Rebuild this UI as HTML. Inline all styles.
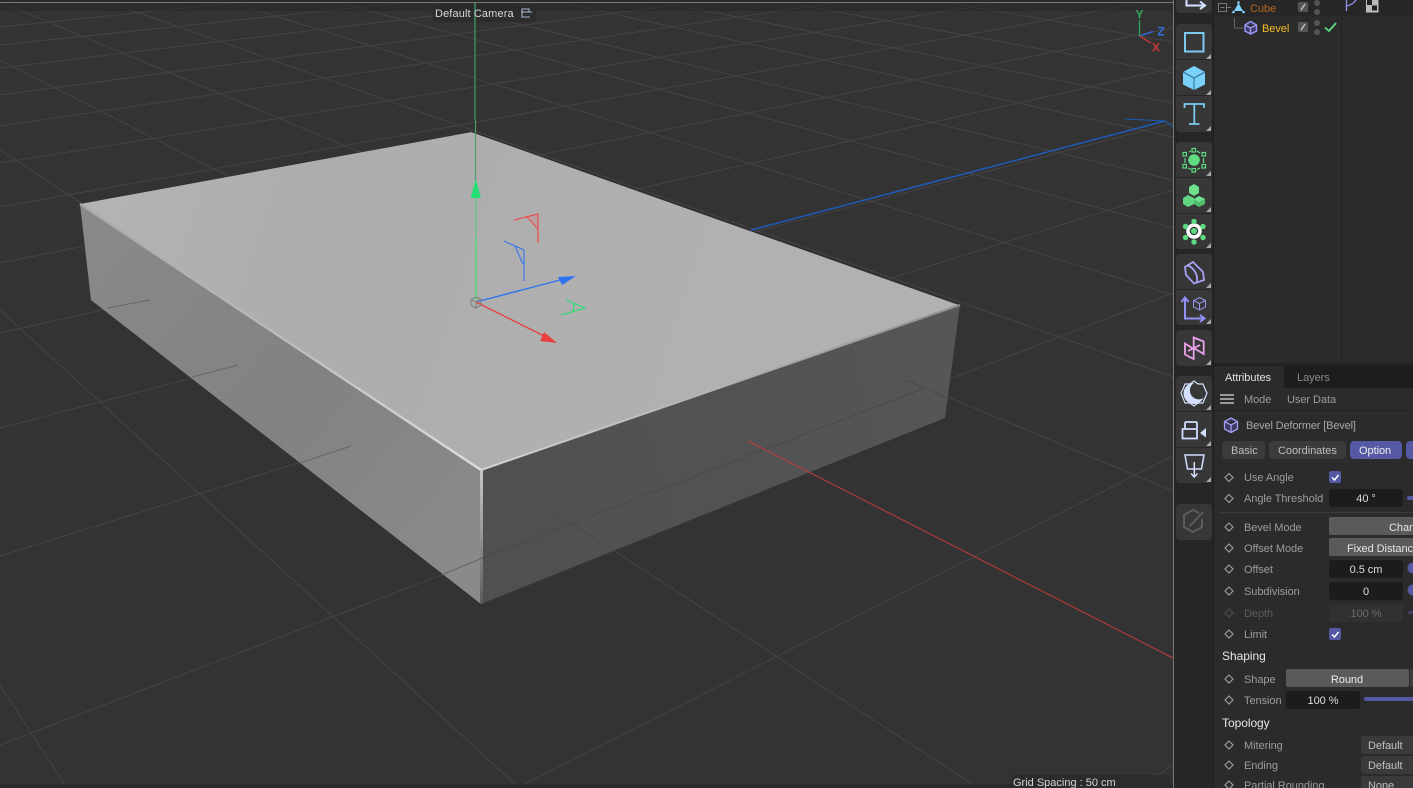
<!DOCTYPE html>
<html><head><meta charset="utf-8"><style>
html,body{margin:0;padding:0;background:#333;width:1413px;height:788px;overflow:hidden}
svg{display:block}
text{font-family:"Liberation Sans",sans-serif;font-size:11px;fill:#9c9c9c;letter-spacing:-.05px}
.v{fill:#dcdcdc;text-anchor:middle}
.h{fill:#e6e6e6;font-size:12px}
</style></head><body>
<svg width="1413" height="788" viewBox="0 0 1413 788" xmlns="http://www.w3.org/2000/svg">
<defs>
<linearGradient id="gt" gradientUnits="userSpaceOnUse" x1="80" y1="204" x2="700" y2="400"><stop offset="0" stop-color="#b4b4b4"/><stop offset=".35" stop-color="#adadad"/><stop offset="1" stop-color="#b1b1b1"/></linearGradient>
<linearGradient id="gl" gradientUnits="userSpaceOnUse" x1="100" y1="250" x2="480" y2="560"><stop offset="0" stop-color="#888"/><stop offset=".5" stop-color="#828282"/><stop offset="1" stop-color="#8a8a8a"/></linearGradient>
<linearGradient id="gr" gradientUnits="userSpaceOnUse" x1="481" y1="500" x2="950" y2="380"><stop offset="0" stop-color="#505050"/><stop offset=".5" stop-color="#525252"/><stop offset="1" stop-color="#565656"/></linearGradient>
<linearGradient id="gv" gradientUnits="userSpaceOnUse" x1="481" y1="470" x2="481" y2="604"><stop offset="0" stop-color="#c8c8c8"/><stop offset=".45" stop-color="#9a9a9a"/><stop offset="1" stop-color="#5a5a5a"/></linearGradient>
<linearGradient id="ge" gradientUnits="userSpaceOnUse" x1="481" y1="470" x2="960" y2="305"><stop offset="0" stop-color="#d4d4d4"/><stop offset="1" stop-color="#8e8e8e"/></linearGradient>
<linearGradient id="gf" gradientUnits="userSpaceOnUse" x1="80" y1="204" x2="481" y2="470"><stop offset="0" stop-color="#a8a8a8"/><stop offset=".45" stop-color="#b8b8b8"/><stop offset="1" stop-color="#dddddd"/></linearGradient>
</defs>

<!-- viewport -->
<rect width="1173" height="788" fill="#333"/>
<g stroke="#444" stroke-width="1" fill="none">
<!-- rising family -->
<path d="M0 27L233 3M0 45L400 3M0 68L540 3M0 95L690 3M0 126L833 3M0 163L997 3M0 207L1077 15L1130 5M0 263L1173 28M0 333L1173 68M0 428L1173 123M0 556L1173 190M0 745L1173 293M517 788L1173 456M1147 783L1173 765"/>
<!-- descending family -->
<path d="M666 3L1173 103M800 5L1173 73M564 3L1173 137M430 3L1173 180M340 3L1173 228M233 3L1173 295M128 9L1173 377M0 2L1173 491M0 60L476 302M0 150L975 786M0 310L517 786M0 685L67 788M950 3L1173 42"/>
</g>
<rect x="0" y="3" width="1173" height="8" fill="#262626" opacity=".55"/>
<rect x="0" y="0" width="1173" height="2" fill="#2b2b2b"/>
<rect x="0" y="2" width="1173" height="1" fill="#777"/>
<rect x="0" y="784" width="1173" height="4" fill="#2a2a2a"/>

<!-- box -->
<polygon points="80,204 481,470 481,604 91,300" fill="url(#gl)"/>
<polygon points="481,470 960,305 945,418 481,604" fill="url(#gr)"/>
<polygon points="80,204 472,132 960,305 481,470" fill="url(#gt)"/>
<path d="M472 132L960 305" stroke="#2a2a2a" stroke-width=".8" fill="none"/>
<path d="M80 204L481 470" stroke="url(#gf)" stroke-width="2.4" fill="none"/>
<path d="M481 470L960 305" stroke="url(#ge)" stroke-width="2" fill="none"/>
<path d="M481.5 470L481.5 604" stroke="url(#gv)" stroke-width="3" fill="none"/>
<g fill="none" stroke-width="1">
<path d="M107 308L150 300M192 377L238 365M300 463L351 446M442 575L482 558" stroke="#666"/>
<path d="M482 558L925 388M907 380L947 398M555 514L615 551" stroke="#494949"/>
<path d="M748 441L1173 658" stroke="#c23c3c"/>
<path d="M751 230L1165 121" stroke="#1f5cbc" stroke-width="1.500"/>
<path d="M1125 119L1165 121L1173 127" stroke="#1f5cbc"/>
</g>

<!-- gizmo -->
<path d="M475 3V120" stroke="#3b9a63" stroke-width="1.300"/>
<path d="M475.500 120V180" stroke="#4f9a6e" stroke-width="1.200"/>
<path d="M476 198V238" stroke="#5fc585" stroke-width="1.200"/>
<path d="M476 238V300" stroke="#3fe075" stroke-width="1.200"/>
<polygon points="475.700,179 481,198 470.700,198" fill="#22df72"/>
<path d="M476 302L560 280" stroke="#2f74ee" stroke-width="1.400"/>
<polygon points="576,276 558,277 562,285" fill="#2f74ee"/>
<path d="M476 302L544 336" stroke="#e84040" stroke-width="1.400"/>
<polygon points="557,343 544,332 540,341" fill="#e84040"/>
<path d="M514 220L538 214L538 243M527 217L538 229" stroke="#ef4444" stroke-width="1.100" fill="none"/>
<polygon points="527,217 538,214 538,229" fill="#d08080" opacity=".35"/>
<path d="M504 241L524 250L524 281M515 246L523 264" stroke="#3578e8" stroke-width="1.100" fill="none"/>
<path d="M566 300L585 308L561 315M574 304L573 313" stroke="#28e070" stroke-width="1.100" fill="none"/>
<path d="M476 297L481 299.500V305L476 308L471 305V299.500ZM471 299.500L476 302L481 299.500M476 302V308" stroke="#7d7d7d" stroke-width="1" fill="none"/>

<!-- corner axis -->
<path d="M1139.500 36V20" stroke="#2fa85c" stroke-width="1.300"/>
<path d="M1139.500 36L1153 31.500" stroke="#2e6fe0" stroke-width="1.300"/>
<path d="M1139.500 36L1151 43" stroke="#d03a3a" stroke-width="1.300"/>
<text x="1139.500" y="18.500" style="fill:#2fa85c;font-size:12px;font-weight:bold;text-anchor:middle">Y</text>
<text x="1161" y="35.500" style="fill:#2e6fe0;font-size:12px;font-weight:bold;text-anchor:middle">Z</text>
<text x="1156" y="51.500" style="fill:#c63a3a;font-size:12px;font-weight:bold;text-anchor:middle">X</text>

<!-- camera label -->
<rect x="433" y="5" width="103" height="17" rx="2" fill="#2a2a2a" opacity=".8"/>
<path d="M475 3V22" stroke="#3b9a63" stroke-width="1.300"/>
<text x="435" y="17" style="fill:#d8d8d8;letter-spacing:.12px">Default Camera</text>
<path d="M522 15V9H529V12M521 12H532M522 15V17H530" stroke="#a8b8d8" stroke-width="1" fill="none"/>
<!-- grid spacing -->
<rect x="1011" y="775" width="159" height="13" fill="#2c2c2c"/>
<text x="1013" y="786" style="fill:#d4d4d4;letter-spacing:0">Grid Spacing : 50 cm</text>

<!-- right side -->
<rect x="1173" y="0" width="240" height="788" fill="#2b2b2b"/>
<rect x="1173" y="0" width="1" height="788" fill="#777"/>
<rect x="1174" y="0" width="39" height="788" fill="#262626"/>
<rect x="1213" y="0" width="1" height="788" fill="#1e1e1e"/>
<g fill="#373737">
<rect x="1176" y="-6" width="36" height="19" rx="4"/>
<rect x="1176" y="24" width="36" height="108" rx="4"/>
<rect x="1176" y="142" width="36" height="107" rx="4"/>
<rect x="1176" y="254" width="36" height="71" rx="4"/>
<rect x="1176" y="330" width="36" height="36" rx="4"/>
<rect x="1176" y="376" width="36" height="107" rx="4"/>
<rect x="1176" y="504" width="36" height="36" rx="4"/>
</g>
<g fill="#262626">
<rect x="1176" y="59" width="36" height="1"/><rect x="1176" y="95" width="36" height="1"/>
<rect x="1176" y="177" width="36" height="1"/><rect x="1176" y="213" width="36" height="1"/>
<rect x="1176" y="289" width="36" height="1"/>
<rect x="1176" y="411" width="36" height="1"/><rect x="1176" y="447" width="36" height="1"/>
</g>
<g fill="#a8a8a8">
<polygon points="1211,54 1211,59 1206,59"/><polygon points="1211,90 1211,95 1206,95"/><polygon points="1211,126 1211,131 1206,131"/>
<polygon points="1211,171 1211,176 1206,176"/><polygon points="1211,207 1211,212 1206,212"/><polygon points="1211,243 1211,248 1206,248"/>
<polygon points="1211,283 1211,288 1206,288"/><polygon points="1211,319 1211,324 1206,324"/><polygon points="1211,360 1211,365 1206,365"/>
<polygon points="1211,405 1211,410 1206,410"/><polygon points="1211,441 1211,446 1206,446"/><polygon points="1211,477 1211,482 1206,482"/>
</g>

<!-- toolbar icons -->
<path d="M1186.500 0V5.500H1204M1200 1.500L1205 5.500L1200 9" stroke="#d5e2ff" stroke-width="2" fill="none"/>
<rect x="1185" y="33" width="18.500" height="18.500" fill="none" stroke="#7ccaf2" stroke-width="2"/>
<polygon points="1194,66 1205,72 1205,84.500 1194,90 1183,84.500 1183,72" fill="#7ad2fb"/>
<path d="M1183 72L1194 78L1205 72M1194 78V90" stroke="#3f7fa3" stroke-width="1.300" fill="none"/>
<path d="M1184.500 108V104H1204V108M1194.300 104V124M1189 124H1199.500" stroke="#7ccaf2" stroke-width="1.800" fill="none"/>

<circle cx="1194" cy="160" r="5.800" fill="#5fdc82"/>
<g fill="none" stroke="#5fdc82" stroke-width="1.200">
<rect x="1192" y="148.500" width="3.500" height="3.500"/><rect x="1183" y="152.500" width="3.500" height="3.500"/><rect x="1202" y="152.500" width="3.500" height="3.500"/>
<rect x="1183" y="164.500" width="3.500" height="3.500"/><rect x="1202" y="164.500" width="3.500" height="3.500"/><rect x="1192" y="168.500" width="3.500" height="3.500"/>
<path d="M1189 152L1191 151M1197 151L1200 153M1185 158V163M1203.500 158V163M1188 168L1191 169.500M1197 169.500L1200 168"/>
</g>
<g>
<polygon points="1194,184 1199,187 1199,193 1194,196 1189,193 1189,187" fill="#6fe08e"/>
<polygon points="1188,195 1194,198 1194,204 1188,207 1183,204 1183,198" fill="#62d582"/>
<polygon points="1199,196 1205,199 1205,204 1199,207 1194,204 1194,199" fill="#4fbd6e"/>
<polygon points="1199,196 1205,199 1199,202 1194,199" fill="#71e290"/>
</g>
<circle cx="1194" cy="231" r="6" fill="none" stroke="#fff" stroke-width="3.500"/>
<circle cx="1194" cy="231" r="3" fill="#5fdc82"/>
<g fill="#5fdc82"><circle cx="1194" cy="221.500" r="2.700"/><circle cx="1203" cy="226.500" r="2.700"/><circle cx="1203" cy="237.500" r="2.700"/><circle cx="1194" cy="242" r="2.700"/><circle cx="1185.500" cy="237.500" r="2.700"/><circle cx="1185.500" cy="226.500" r="2.700"/></g>

<path d="M1193 262L1203 272L1204 280L1194 283.500L1186 275L1185 267ZM1187 265C1194 268 1198 274 1197 282" stroke="#a6a2f2" stroke-width="1.800" fill="none"/>
<path d="M1185 299V318.500H1203M1181.500 302L1185 297.500L1188.500 302M1200 315L1204.500 318.500L1200 322" stroke="#9090f6" stroke-width="2" fill="none"/>
<path d="M1199.500 297.500L1205.500 300.500V307L1199.500 310L1193.500 307V300.500ZM1193.500 300.500L1199.500 303.500L1205.500 300.500M1199.500 303.500V310" stroke="#9a9af0" stroke-width="1" fill="none"/>
<path d="M1185 343.500L1193.700 349V359L1185 354.500ZM1193.700 337.500L1203.700 341.500V354L1193.700 348ZM1188 351L1200 345" stroke="#e9a2ea" stroke-width="1.800" fill="none"/>

<polygon points="1194,381 1198,384 1203,384 1205,389 1207,393 1205,398 1203,403 1198,403 1194,406 1190,403 1185,403 1183,398 1181,393 1183,389 1185,384 1190,384" fill="#373737" stroke="#d4e0ff" stroke-width="1.200"/>
<path d="M1194 383A10.500 10.500 0 1 0 1203.500 398A8.500 8.500 0 0 1 1194 383Z" fill="#d4e0ff"/>
<path d="M1182.500 429H1197V438.500H1182.500ZM1185 429V423.500Q1185 422 1186.500 422H1195.500Q1197 422 1197 423.500V428" stroke="#d2deff" stroke-width="1.800" fill="none"/>
<polygon points="1200,433 1206,428 1206,437.500" fill="#d2deff"/>
<path d="M1185 455H1204L1201.500 469H1187.500ZM1194.300 462V476M1191 473.500L1194.300 477L1197.500 473.500" stroke="#d2deff" stroke-width="1.500" fill="none"/>
<path d="M1199 513L1193 510L1184 515V527L1193 532L1202 527V519M1190 526L1203 512" stroke="#5c5c5c" stroke-width="2" fill="none"/>

<!-- object manager -->
<rect x="1214" y="0" width="127" height="16" fill="#272727"/>
<rect x="1341" y="0" width="1" height="363" fill="#222"/>
<rect x="1342" y="0" width="71" height="16" fill="#272727"/>
<path d="M1218.500 3.500H1226.500V11.500H1218.500ZM1220.500 7.500H1224.500M1227 7.500H1231" stroke="#777" stroke-width="1" fill="none"/>
<polygon points="1238.500,3 1243,11 1234,11" fill="#7fd4ff"/>
<circle cx="1233.500" cy="12" r="1.300" fill="#7fd4ff"/><circle cx="1243.500" cy="12" r="1.300" fill="#7fd4ff"/><circle cx="1238.500" cy="2.500" r="1.300" fill="#7fd4ff"/>
<text x="1250" y="12" style="fill:#b5661f">Cube</text>
<rect x="1298" y="2" width="10" height="10" rx="1.500" fill="#555"/><path d="M1301 10L1305 4" stroke="#ccc" stroke-width="1.200"/>
<circle cx="1317" cy="3" r="3" fill="#555"/><circle cx="1317" cy="12" r="3" fill="#555"/>
<path d="M1234.500 18V28H1243" stroke="#666" fill="none"/>
<path d="M1250.500 21.500L1256.500 25V31L1250.500 34L1245 31V25ZM1245 25L1250.500 28L1256.500 25M1250.500 28V34" fill="#3c3a60" stroke="#9a96f5" stroke-width="1.500"/>
<text x="1262" y="32" style="fill:#f5bb25">Bevel</text>
<rect x="1298" y="22" width="10" height="10" rx="1.500" fill="#555"/><path d="M1301 30L1305 24" stroke="#ccc" stroke-width="1.200"/>
<circle cx="1317" cy="23" r="3" fill="#555"/><circle cx="1317" cy="32" r="3" fill="#555"/>
<path d="M1325 27.500L1329 31L1336 23" stroke="#5fdc82" stroke-width="1.800" fill="none"/>
<path d="M1346.500 11V0M1346.500 6C1351 5 1354 3 1356 0" stroke="#8f8ff0" stroke-width="1.300" fill="none"/>
<rect x="1366" y="0" width="12.500" height="12.500" fill="#bbb"/><rect x="1367" y="0" width="5" height="5" fill="#222"/><rect x="1372" y="5.500" width="5" height="5" fill="#222"/>

<!-- attributes header -->
<rect x="1214" y="363" width="199" height="3" fill="#222"/>
<rect x="1214" y="366" width="199" height="22" fill="#1d1d1d"/>
<rect x="1214" y="366" width="70" height="22" fill="#2b2b2b"/>
<text x="1225" y="381" style="fill:#e0e0e0">Attributes</text>
<text x="1297" y="381" style="fill:#8a8a8a">Layers</text>
<rect x="1220" y="394" width="14" height="2" fill="#999"/><rect x="1220" y="398" width="14" height="2" fill="#999"/><rect x="1220" y="402" width="14" height="2" fill="#999"/>
<text x="1244" y="403">Mode</text>
<text x="1287" y="403">User Data</text>
<rect x="1214" y="410" width="199" height="1" fill="#222"/>
<path d="M1231 418L1237.500 421.500V429L1231 432.500L1224.500 429V421.500ZM1224.500 421.500L1231 425L1237.500 421.500M1231 425V432" fill="#3c3a60" stroke="#a29ff0" stroke-width="1.300"/>
<text x="1246" y="429" style="fill:#a8a8a8;letter-spacing:-.15px">Bevel Deformer [Bevel]</text>
<rect x="1222" y="441" width="43" height="18" rx="4" fill="#3b3b3b"/>
<rect x="1269" y="441" width="77" height="18" rx="4" fill="#3b3b3b"/>
<rect x="1350" y="441" width="52" height="18" rx="4" fill="#5558a2"/>
<rect x="1406" y="441" width="20" height="18" rx="4" fill="#5558a2"/>
<text x="1231" y="454" style="fill:#bdbdbd">Basic</text>
<text x="1278" y="454" style="fill:#bdbdbd">Coordinates</text>
<text x="1359" y="454" style="fill:#f0f0f0">Option</text>

<!-- diamonds -->
<g fill="none" stroke="#9a9a9a" stroke-width="1.200">
<path d="M1229 473.500L1233 477.500L1229 481.500L1225 477.500Z"/>
<path d="M1229 494.500L1233 498.500L1229 502.500L1225 498.500Z"/>
<path d="M1229 523L1233 527L1229 531L1225 527Z"/>
<path d="M1229 544L1233 548L1229 552L1225 548Z"/>
<path d="M1229 565L1233 569L1229 573L1225 569Z"/>
<path d="M1229 587L1233 591L1229 595L1225 591Z"/>
<path d="M1229 630L1233 634L1229 638L1225 634Z"/>
<path d="M1229 675L1233 679L1229 683L1225 679Z"/>
<path d="M1229 696L1233 700L1229 704L1225 700Z"/>
<path d="M1229 741L1233 745L1229 749L1225 745Z"/>
<path d="M1229 761L1233 765L1229 769L1225 765Z"/>
<path d="M1229 781L1233 785L1229 789L1225 785Z"/>
<path d="M1229 609L1233 613L1229 617L1225 613Z" stroke="#4c4c4c"/>
</g>
<text x="1244" y="481">Use Angle</text>
<text x="1244" y="502">Angle Threshold</text>
<text x="1244" y="531">Bevel Mode</text>
<text x="1244" y="552">Offset Mode</text>
<text x="1244" y="573">Offset</text>
<text x="1244" y="595">Subdivision</text>
<text x="1244" y="617" style="fill:#5c5c5c">Depth</text>
<text x="1244" y="638">Limit</text>
<text x="1222" y="660" class="h">Shaping</text>
<text x="1244" y="683">Shape</text>
<text x="1244" y="704">Tension</text>
<text x="1222" y="727" class="h">Topology</text>
<text x="1244" y="749">Mitering</text>
<text x="1244" y="769">Ending</text>
<text x="1244" y="789">Partial Rounding</text>

<!-- controls -->
<rect x="1329" y="471" width="12" height="12" rx="2" fill="#5558a2"/>
<path d="M1332 477.500L1334.500 480L1338.500 475" stroke="#fff" stroke-width="1.500" fill="none"/>
<rect x="1329" y="628" width="12" height="12" rx="2" fill="#5558a2"/>
<path d="M1332 634.500L1334.500 637L1338.500 632" stroke="#fff" stroke-width="1.500" fill="none"/>
<rect x="1329" y="489" width="74" height="18" rx="3" fill="#1c1c1c"/>
<text x="1366" y="502" class="v">40 °</text>
<rect x="1407" y="496" width="10" height="4" rx="2" fill="#5558a2"/>
<rect x="1220" y="512" width="193" height="1" fill="#3b3b3b"/>
<rect x="1329" y="517" width="90" height="18" rx="2" fill="#5a5a5a"/>
<text x="1389" y="531" style="fill:#e6e6e6">Chan</text>
<rect x="1329" y="538" width="90" height="18" rx="2" fill="#5a5a5a"/>
<text x="1347" y="552" style="fill:#e6e6e6">Fixed Distance</text>
<rect x="1329" y="560" width="74" height="18" rx="3" fill="#1c1c1c"/>
<text x="1366" y="573" class="v">0.5 cm</text>
<circle cx="1413" cy="568" r="5.500" fill="#5558a2"/>
<rect x="1329" y="582" width="74" height="18" rx="3" fill="#1c1c1c"/>
<text x="1366" y="595" class="v">0</text>
<circle cx="1413" cy="590" r="5.500" fill="#5558a2"/>
<rect x="1329" y="604" width="74" height="18" rx="3" fill="#313131"/>
<text x="1366" y="617" class="v" style="fill:#6a6a6a">100 %</text>
<rect x="1408" y="611" width="8" height="3" rx="1.500" fill="#3d3e60"/>
<rect x="1286" y="669" width="123" height="18" rx="2" fill="#5a5a5a"/>
<rect x="1410" y="669" width="5" height="18" fill="#3c3c3c"/>
<text x="1347" y="683" class="v" style="fill:#ececec">Round</text>
<rect x="1286" y="691" width="74" height="18" rx="3" fill="#1c1c1c"/>
<text x="1323" y="704" class="v">100 %</text>
<rect x="1364" y="697" width="55" height="4" rx="2" fill="#5558a2"/>
<rect x="1361" y="736" width="60" height="18" rx="3" fill="#3a3a3a"/>
<text x="1368" y="749" style="fill:#c0c0c0">Default</text>
<rect x="1361" y="756" width="60" height="18" rx="3" fill="#3a3a3a"/>
<text x="1368" y="769" style="fill:#c0c0c0">Default</text>
<rect x="1361" y="776" width="60" height="18" rx="3" fill="#3a3a3a"/>
<text x="1368" y="789" style="fill:#c0c0c0">None</text>
</svg>
</body></html>
